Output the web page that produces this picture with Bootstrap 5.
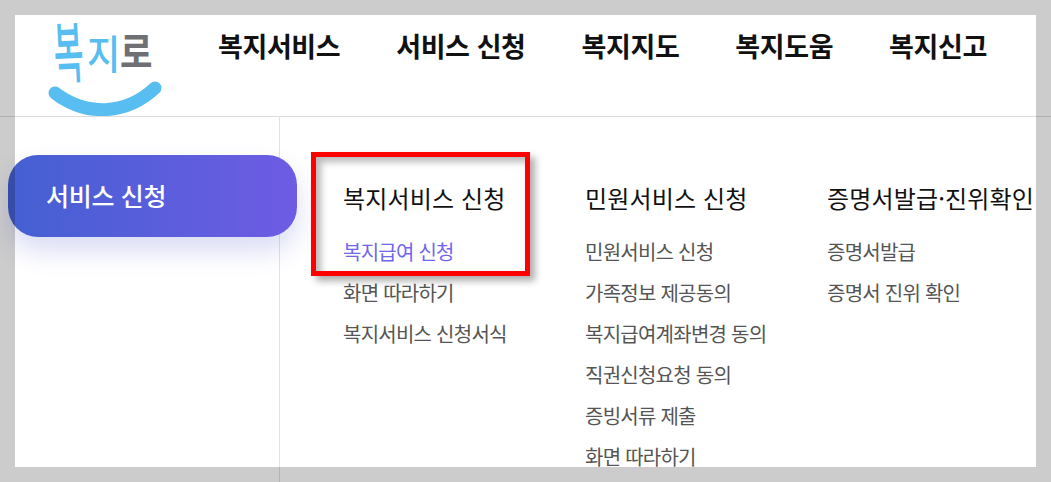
<!doctype html>
<html lang="ko"><head><meta charset="utf-8"><title>복지로</title>
<link rel="stylesheet" href="https://cdn.jsdelivr.net/npm/bootstrap@5.3.0/dist/css/bootstrap.min.css">
<style>
html,body{height:482px;overflow:hidden;background:#fff}
body{font-family:"Noto Sans CJK KR","Noto Sans",sans-serif;color:#111}
.shell{position:relative;width:1051px;height:482px;overflow:hidden}
.topbar{height:117px;border-bottom:1px solid #dcdcdc}
.brand{width:218px;height:116px;flex:none}
.gnb{gap:56px;padding-top:27px;margin:0;list-style:none;padding-left:0}
.gnb a{display:block;font-size:27px;font-weight:700;line-height:38px;color:#111;text-decoration:none;letter-spacing:-.4px;white-space:nowrap}
.side{width:280px;height:365px;border-right:1px solid #e2e2e2;flex:none;padding:38px 0 0 8px}
.pill{width:289px;height:82px;border-radius:30px;background:linear-gradient(90deg,#4460d2,#6e5ce4);color:#fff;font-size:25px;font-weight:500;line-height:80px;padding-left:38px;box-shadow:0 14px 26px rgba(70,80,200,.2);position:relative;letter-spacing:-.3px}
.cols{padding:62px 0 0 63px}
.menu-col{width:242px;flex:none}
.menu-col h3{font-size:24px;font-weight:400;line-height:38px;margin:0 0 14px;color:#111;white-space:nowrap;letter-spacing:.15px}
.menu-col a{display:block;font-size:20px;line-height:41px;color:#555;text-decoration:none;white-space:nowrap;letter-spacing:-.75px}
.menu-col a.on{color:#6f66ee}
.frame{position:absolute;inset:0;border:15px solid rgba(0,0,0,.2);pointer-events:none}
.callout{position:absolute;left:311px;top:152px;width:219px;height:124px;border:5px solid #f00;box-shadow:5px 5px 7px rgba(0,0,0,.32),inset 5px 5px 7px rgba(0,0,0,.28);pointer-events:none}
</style></head><body>
<div class="shell">
 <header class="topbar d-flex">
  <svg class="brand" viewBox="0 0 218 116" aria-label="복지로" role="img">
   <text transform="translate(55 78) rotate(-3) scale(.85 1.75)" font-size="38" font-weight="500" fill="#58bdf0" font-family="Noto Sans CJK KR">복</text>
   <text transform="translate(87 69) scale(.95 1.05)" font-size="38" font-weight="500" fill="#58bdf0" font-family="Noto Sans CJK KR">지</text>
   <text transform="translate(120 67) scale(.98 1.15)" font-size="36" font-weight="700" fill="#6e7074" font-family="Noto Sans CJK KR">로</text>
   <path d="M55 93C85 116 125 116 155 88" fill="none" stroke="#58bdf0" stroke-width="13" stroke-linecap="round"/>
  </svg>
  <ul class="gnb d-flex">
   <li><a href="#">복지서비스</a></li><li><a href="#">서비스 신청</a></li><li><a href="#">복지지도</a></li><li><a href="#">복지도움</a></li><li><a href="#">복지신고</a></li>
  </ul>
 </header>
 <div class="d-flex">
  <aside class="side"><div class="pill">서비스 신청</div></aside>
  <div class="cols d-flex">
   <div class="menu-col"><h3>복지서비스 신청</h3><a class="on" href="#">복지급여 신청</a><a href="#">화면 따라하기</a><a href="#">복지서비스 신청서식</a></div>
   <div class="menu-col"><h3>민원서비스 신청</h3><a href="#">민원서비스 신청</a><a href="#">가족정보 제공동의</a><a href="#">복지급여계좌변경 동의</a><a href="#">직권신청요청 동의</a><a href="#">증빙서류 제출</a><a href="#">화면 따라하기</a></div>
   <div class="menu-col"><h3>증명서발급·진위확인</h3><a href="#">증명서발급</a><a href="#">증명서 진위 확인</a></div>
  </div>
 </div>
 <div class="callout"></div>
 <div class="frame"></div>
</div>
<script src="https://cdn.jsdelivr.net/npm/bootstrap@5.3.0/dist/js/bootstrap.bundle.min.js"></script>
</body></html>
